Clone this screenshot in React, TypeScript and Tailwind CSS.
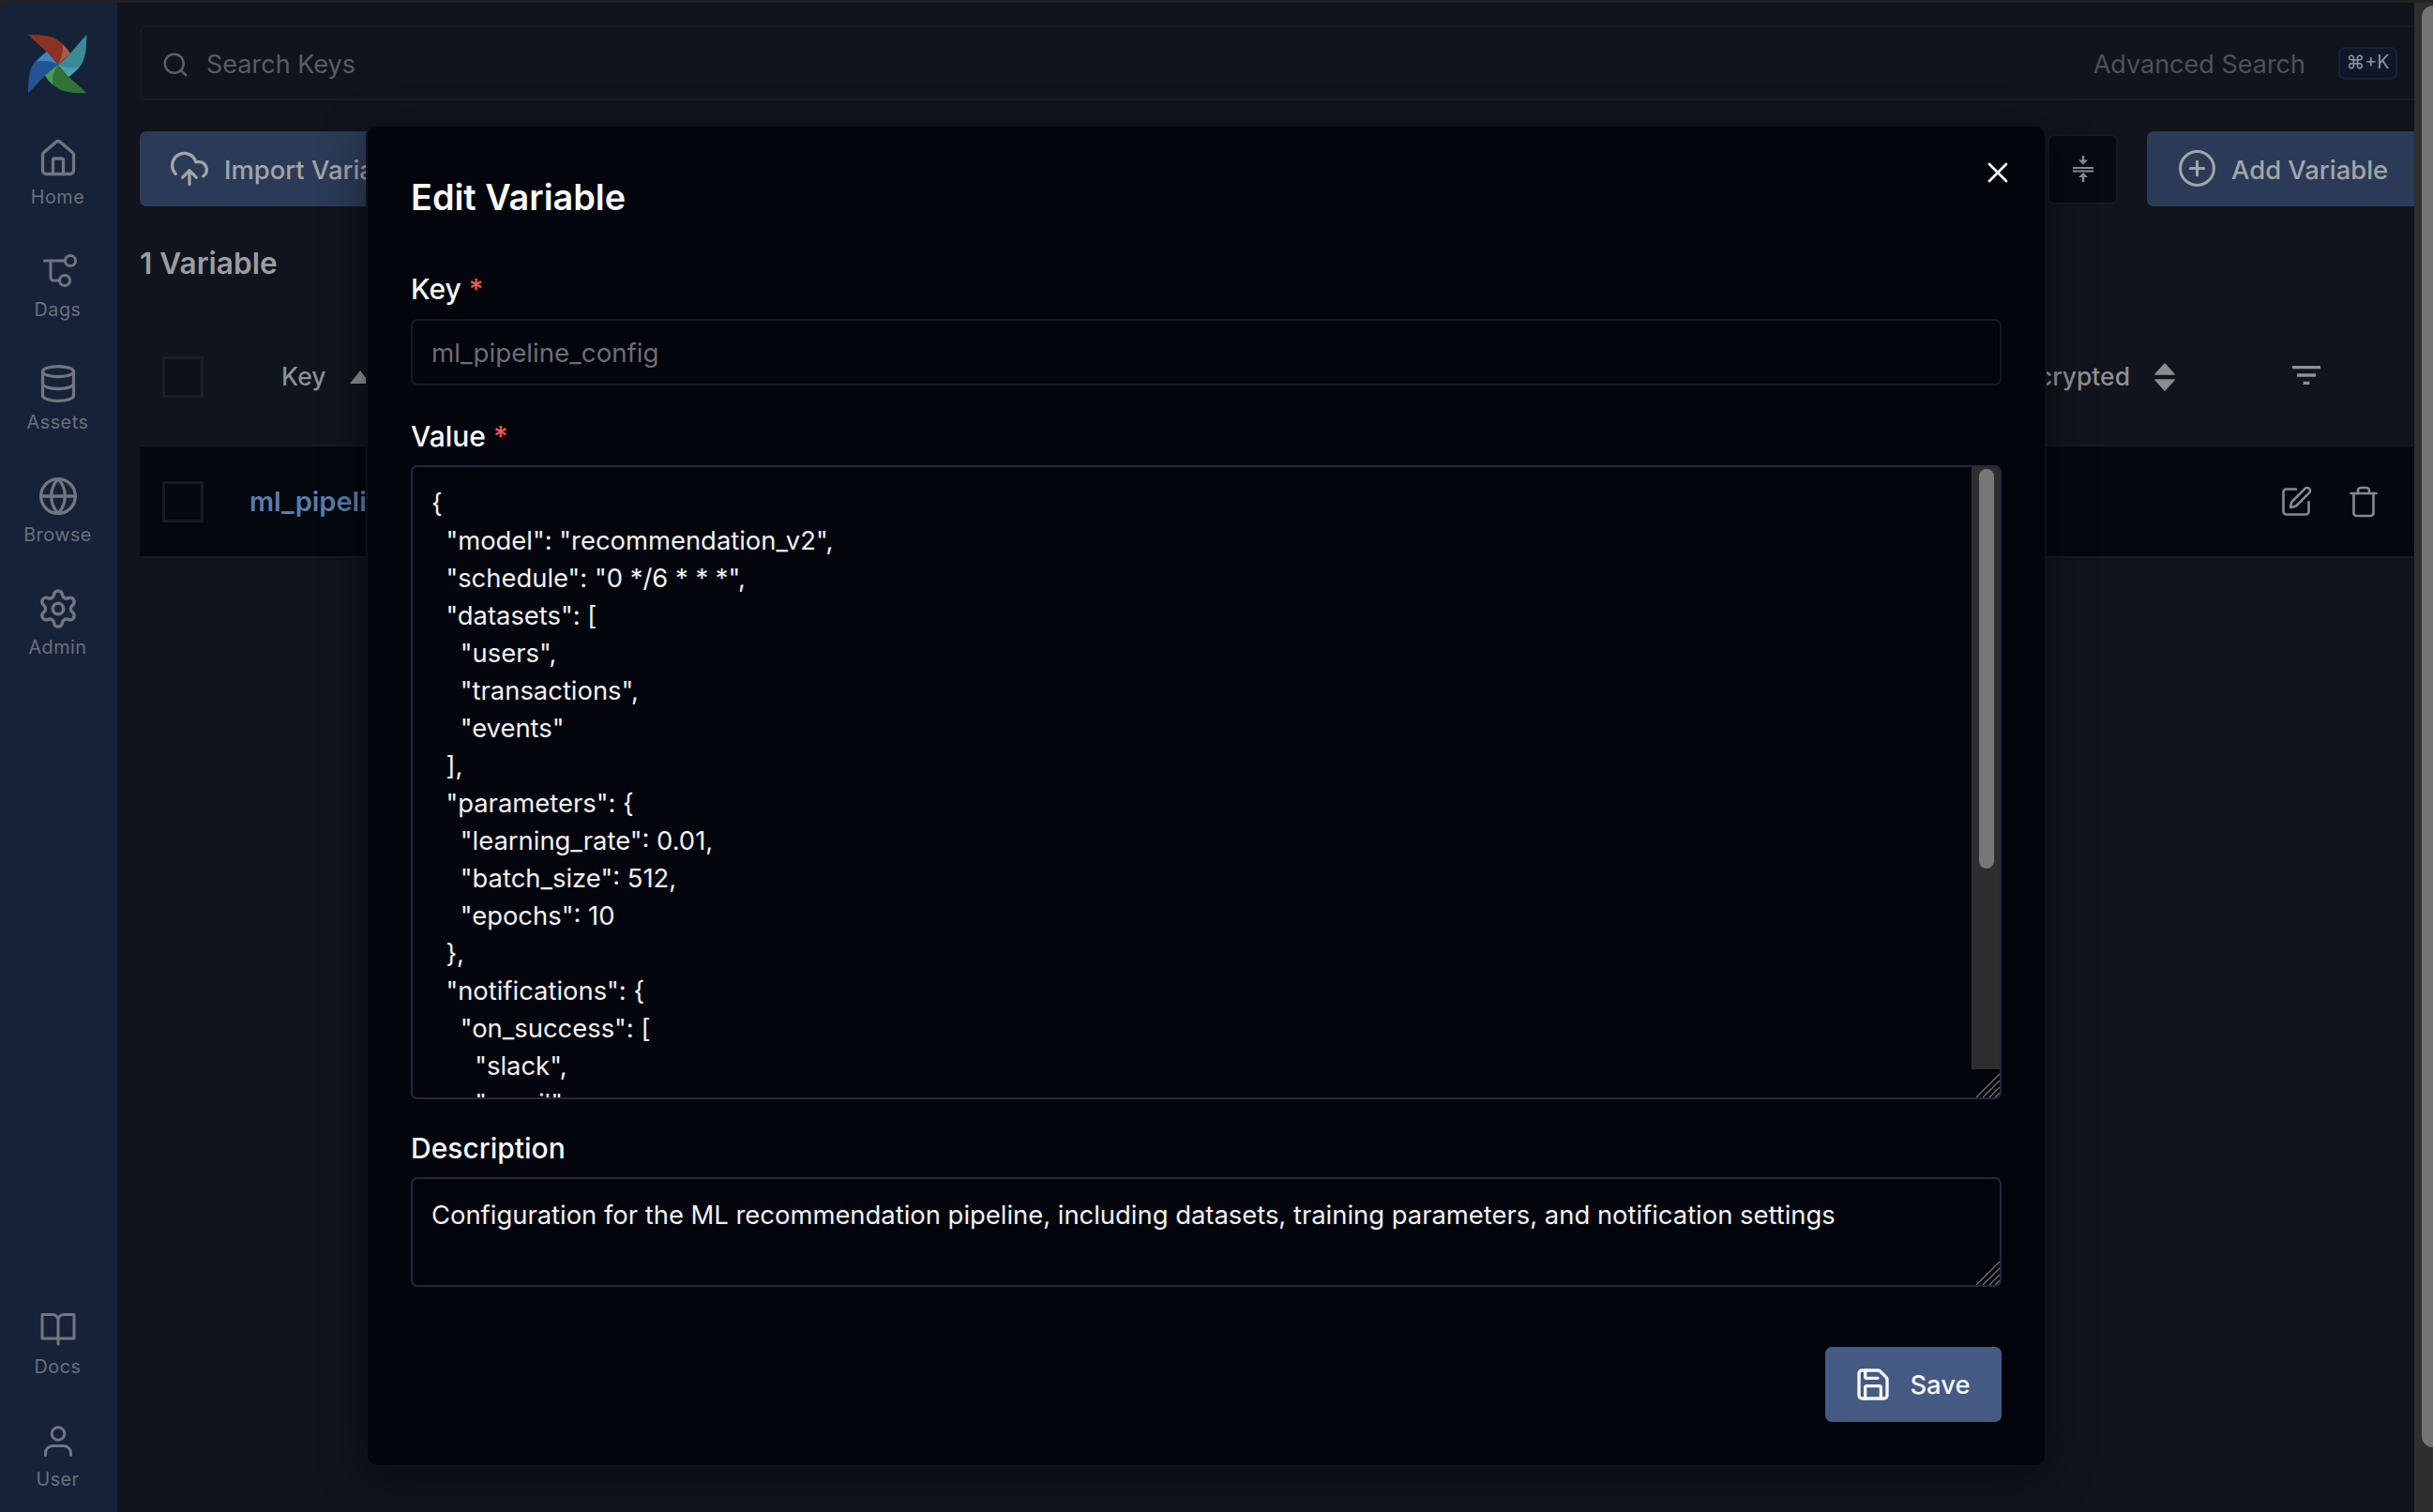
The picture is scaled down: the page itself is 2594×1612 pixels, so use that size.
import {
  CirclePlus,
  CloudUpload,
  Database,
  Globe,
  House,
  Save,
  Search,
  Settings,
  SquarePen,
  Trash,
  X,
} from 'lucide-react';
import { MdFilterList } from 'react-icons/md';
import type { ReactNode } from 'react';

// only the part of the value that is visible in the box
const configJson = `{
  "model": "recommendation_v2",
  "schedule": "0 */6 * * *",
  "datasets": [
    "users",
    "transactions",
    "events"
  ],
  "parameters": {
    "learning_rate": 0.01,
    "batch_size": 512,
    "epochs": 10
  },
  "notifications": {
    "on_success": [
      "slack",
      "email"`;

function AirflowLogo() {
  return (
    <svg viewBox="90 110 190 190" className="h-[63px] w-[63px]">
      <path d="M90 110 C125 110 150 112 172 120 C190 128 205 142 225 170 L186 206 C165 175 125 145 90 110Z" fill="#8a3323" />
      <path d="M200 140 C212 150 220 160 225 170 L186 206 C198 185 204 162 200 140Z" fill="#a85c4a" />
      <path d="M278 110 C278 145 276 170 268 192 C260 212 246 228 220 246 L186 206 C216 186 245 145 278 110Z" fill="#3a8a96" />
      <path d="M186 206 C210 218 232 220 252 214 C242 226 232 236 220 246Z" fill="#4ba2ad" />
      <path d="M278 298 C243 298 218 296 196 288 C178 280 160 266 144 240 L186 206 C205 236 243 263 278 298Z" fill="#2f7338" />
      <path d="M144 240 L186 206 C172 226 166 250 170 272 C158 262 150 252 144 240Z" fill="#4b9c52" />
      <path d="M90 298 C90 263 92 238 100 216 C108 198 126 180 150 164 L186 206 C156 226 125 263 90 298Z" fill="#205495" />
      <path d="M116 198 C126 184 138 174 150 164 L186 206 C164 194 138 190 116 198Z" fill="#3f86b9" />
    </svg>
  );
}

function DagIcon() {
  return (
    <svg viewBox="0 0 40 40" className="h-10 w-10" fill="none" stroke="currentColor" strokeWidth="3" strokeLinecap="round">
      <circle cx="33" cy="9" r="5.5" />
      <circle cx="27" cy="30" r="5.5" />
      <path d="M5.5 9H27.5M12 9V27a3 3 0 0 0 3 3H21.5" />
    </svg>
  );
}

function DocsIcon() {
  return (
    <svg viewBox="0 0 40 40" className="h-10 w-10" fill="none" stroke="currentColor" strokeWidth="3" strokeLinejoin="round" strokeLinecap="round">
      <path d="M3 5.5H14a6 6 0 0 1 6 6V37M37 5.5H26a6 6 0 0 0-6 6M3 5.5V31H37V5.5" />
    </svg>
  );
}

function UserIcon() {
  return (
    <svg viewBox="0 0 40 40" className="h-10 w-10" fill="none" stroke="currentColor" strokeWidth="3" strokeLinecap="round">
      <circle cx="20" cy="12.5" r="6.8" />
      <path d="M6.5 35.5V33a7.5 7.5 0 0 1 7.5-7.5h12a7.5 7.5 0 0 1 7.5 7.5V35.5" />
    </svg>
  );
}

function FoldIcon() {
  return (
    <svg viewBox="0 0 22 28" className="h-7 w-[22px]" fill="currentColor">
      <rect x="0" y="12" width="22" height="2" />
      <rect x="0" y="15.5" width="22" height="2" />
      <rect x="9.8" y="0" width="2.4" height="5" />
      <path d="M6 4.5H16L11 9.5Z" />
      <rect x="9.8" y="22" width="2.4" height="6" />
      <path d="M6 23H16L11 18Z" />
    </svg>
  );
}

function SortIcon() {
  return (
    <svg viewBox="0 0 22 30" className="h-[30px] w-[22px]" fill="currentColor" stroke="currentColor" strokeWidth="1.5" strokeLinejoin="round">
      <path d="M11 1L21 12H1Z" />
      <path d="M11 29L21 18H1Z" />
    </svg>
  );
}

function ResizeGrip() {
  return (
    <svg viewBox="0 0 25 25" className="absolute bottom-[2px] right-[2px] h-[25px] w-[25px]" stroke="#6f6f6f" strokeWidth="1.4">
      <path d="M0 25L25 0M7 25L25 7M14 25L25 14M20 25L25 20" />
    </svg>
  );
}

function NavItem({ icon, label }: { icon: ReactNode; label: string }) {
  return (
    <div className="flex h-[120px] flex-col items-center pr-[2px] pt-[26px] text-[#72767f]">
      <div className="flex h-10 items-center justify-center">{icon}</div>
      <span className="mt-[6px] text-[19.8px] leading-[30px] tracking-[0.5px] text-[#6c7079]">{label}</span>
    </div>
  );
}

const textareaClass =
  'block w-full resize-none overflow-hidden rounded-[7px] border-2 border-[#1e2a3d] bg-transparent pl-[20px] pr-[21px] pt-[18px] text-[27.4px] leading-[40px] text-[#f2f3f5] outline-none';

export default function App() {
  return (
    <div className="relative h-[1612px] w-[2594px] overflow-hidden bg-[#222226] pt-[3px] font-[Inter,sans-serif]">
      <div className="flex h-[1609px] overflow-hidden rounded-tl-[12px]">
        {/* Sidebar */}
        <aside className="flex w-[125px] shrink-0 flex-col justify-between bg-[#162238] pb-[2px]">
          <div>
            <div className="flex h-[120px] justify-center pr-[2px] pt-[34px]">
              <AirflowLogo />
            </div>
            <NavItem icon={<House size={44} strokeWidth={1.8} />} label="Home" />
            <NavItem icon={<DagIcon />} label="Dags" />
            <NavItem icon={<Database size={44} strokeWidth={1.8} />} label="Assets" />
            <NavItem icon={<Globe size={44} strokeWidth={1.8} />} label="Browse" />
            <NavItem icon={<Settings size={46} strokeWidth={1.8} />} label="Admin" />
          </div>
          <div>
            <NavItem icon={<DocsIcon />} label="Docs" />
            <NavItem icon={<UserIcon />} label="User" />
          </div>
        </aside>

        {/* Main content */}
        <main className="min-w-0 flex-1 overflow-hidden bg-[#10141c] pl-6 pt-6">
          <div className="mr-[-7px]">
            <div className="flex h-20 items-center rounded-l-[7px] border-2 border-r-0 border-[#161b25] pl-[21px] pr-[25px] pt-1">
              <Search size={30} className="text-[#5a5e68]" />
              <span className="ml-[18px] flex-1 text-[27px] text-[#585c66]">Search Keys</span>
              <span className="text-[27px] text-[#4d5159]">Advanced Search</span>
              <span className="ml-[35px] flex h-[35px] w-[63px] -translate-y-[2px] items-center justify-center rounded-[7px] border-2 border-[#15233d] bg-[#0f1729] text-[19.8px] text-[#8f939b]">
                ⌘+K
              </span>
            </div>

            <div className="mt-[33px] flex h-20 items-center justify-between">
              <button className="flex h-20 items-center gap-[15px] rounded-[7px] bg-[#2b3b57] pl-[31px] pr-9 pt-[3px] text-[27.4px] font-medium text-[#a2a5aa]">
                <CloudUpload size={44} strokeWidth={1.8} className="-translate-y-[2px]" />
                Import Variables
              </button>
              <div className="flex items-center gap-[31px]">
                <button className="flex h-[75px] w-[75px] items-center justify-center rounded-[7px] border-2 border-[#151a24] bg-[#070a11] text-[#8b8d92]">
                  <FoldIcon />
                </button>
                <button className="flex h-20 w-[292px] items-center gap-[15px] rounded-l-[7px] bg-[#2b3b57] pl-8 pt-[3px] text-[27.4px] font-medium text-[#a2a5aa]">
                  <CirclePlus size={43} strokeWidth={1.7} className="-translate-y-[2px]" />
                  Add Variable
                </button>
              </div>
            </div>

            <h2 className="mt-[37px] text-[31.6px] font-semibold leading-[48px] text-[#9b9da2]">1 Variable</h2>

            <div className="mt-[25px] flex h-[144px] items-center justify-between pl-6 pr-[102px]">
              <div className="flex items-center">
                <span className="h-11 w-11 border-[3px] border-[#191e28] bg-[#0d1119]" />
                <span className="ml-[83px] text-[26.46px] font-medium text-[#8e9093]">Key</span>
                <span className="ml-[26px] text-[#8a8c90]">
                  <svg viewBox="0 0 22 14" className="h-[14px] w-[22px]" fill="currentColor">
                    <path d="M11 0L22 14H0Z" />
                  </svg>
                </span>
              </div>
              <div className="flex items-center">
                <span className="text-[26.46px] font-medium text-[#8e9093]">Encrypted</span>
                <span className="ml-[26px] text-[#8a8c90]">
                  <SortIcon />
                </span>
                <span className="ml-[120px] -translate-y-[2px] text-[#8f9196]">
                  <MdFilterList size={40} />
                </span>
              </div>
            </div>

            <div className="flex h-[121px] items-center justify-between border-y-2 border-[#151a23] bg-[#03080f] pl-6 pr-[43px]">
              <div className="flex items-center">
                <span className="h-11 w-11 border-[3px] border-[#151b26] bg-[#05080f]" />
                <span className="ml-[49px] text-[29px] font-semibold text-[#5b7bac]">ml_pipeline_config</span>
              </div>
              <div className="flex items-center gap-9 text-[#85898f]">
                <SquarePen size={36} strokeWidth={1.75} />
                <Trash size={36} strokeWidth={1.75} />
              </div>
            </div>
          </div>
        </main>

        {/* Window scrollbar */}
        <div className="h-full w-5 shrink-0 bg-[#2e2e2e] pt-[3px]">
          <div className="ml-2 h-[1537px] rounded-l-full bg-[#757575]" />
        </div>
      </div>

      {/* Edit dialog */}
      <div className="absolute left-[390px] top-[133px] h-[1431px] w-[1792px] rounded-[12px] border-2 border-[#0e1119] bg-[#02050c] px-[46px] shadow-[0_12px_50px_rgba(0,0,0,0.45)]">
        <X size={36} strokeWidth={1.8} className="absolute right-[32px] top-[31px] text-white" />
        <h1 className="mt-[50px] text-[37.8px] font-semibold leading-[50px] text-[#fafbfc]">Edit Variable</h1>

        <label className="mt-[51px] block text-[30px] font-medium leading-[44px] text-[#fafbfc]">
          Key <span className="text-[#f05a5a]">*</span>
        </label>
        <input
          readOnly
          value="ml_pipeline_config"
          className="mt-[10px] block h-[71px] w-full rounded-[7px] border-2 border-[#141b27] bg-transparent px-[20px] text-[27.7px] text-[#6b6e73] outline-none"
        />

        <label className="mt-[32px] block text-[30px] font-medium leading-[44px] text-[#fafbfc]">
          Value <span className="text-[#f05a5a]">*</span>
        </label>
        <div className="relative mt-[9px]">
          <textarea readOnly defaultValue={configJson} className={`${textareaClass} h-[676px] whitespace-pre`} />
          <div className="absolute right-[2px] top-[2px] h-[642px] w-[30px] rounded-tr-[5px] bg-[#2e2e2e] pl-2 pt-[2px]">
            <div className="h-[426px] w-4 rounded-full bg-[#777777]" />
          </div>
          <ResizeGrip />
        </div>

        <label className="mt-[30px] block text-[30px] font-medium leading-[44px] text-[#fafbfc]">Description</label>
        <div className="relative mt-[9px]">
          <textarea
            readOnly
            defaultValue="Configuration for the ML recommendation pipeline, including datasets, training parameters, and notification settings"
            className={`${textareaClass} h-[117px]`}
          />
          <ResizeGrip />
        </div>

        <div className="mt-[64px] flex justify-end">
          <button className="flex h-20 w-[188px] items-center justify-center gap-[19px] rounded-[7px] bg-[#445a82] pr-[2px] text-[27.4px] font-medium text-[#f6f7f9]">
            <Save size={40} strokeWidth={2} />
            <span className="pt-[2px]">Save</span>
          </button>
        </div>
      </div>
    </div>
  );
}
